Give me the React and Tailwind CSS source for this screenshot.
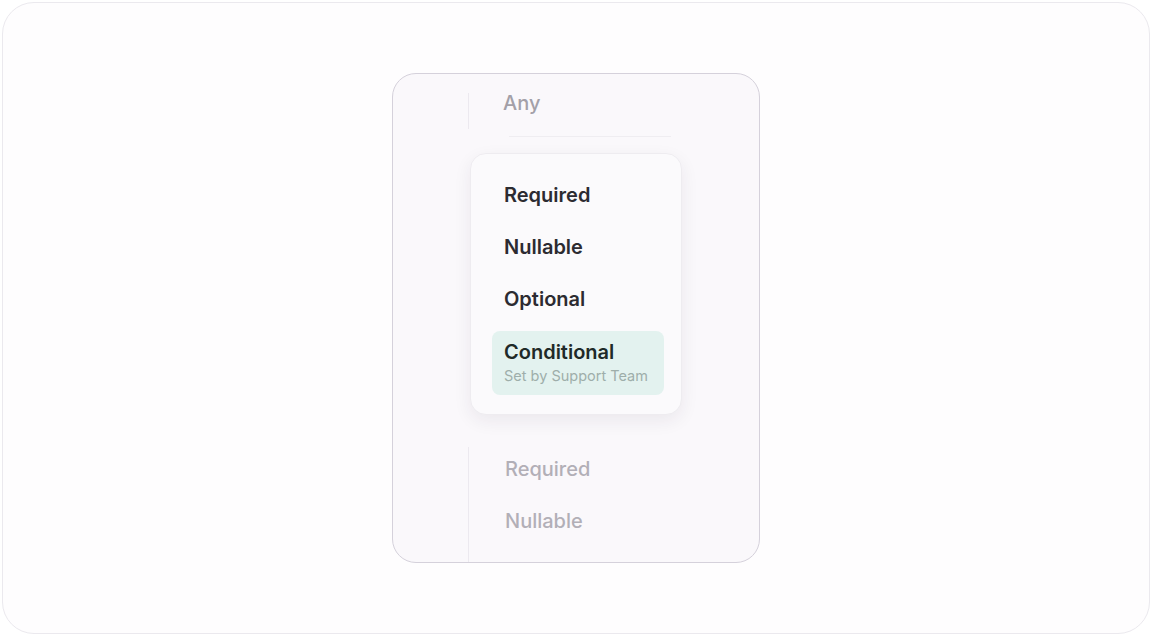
import React from "react";

const options = ["Required", "Nullable", "Optional"];
const faded = ["Required", "Nullable"];

const App = () => {
  return (
    <div
      className="w-[1152px] h-[636px] bg-white p-[2px]"
      style={{ fontFamily: "Inter, 'Noto Sans', sans-serif" }}
    >
      <div className="w-full h-full rounded-[32px] border border-[#ebe9ee] bg-[#fefdfe] flex items-center justify-center">
        <div className="w-[368px] h-[490px] rounded-[24px] border border-[#d5d1db] bg-[#faf8fb] overflow-hidden flex flex-col pl-[75px]">
          {/* previous field */}
          <div className="mt-[15px] h-[42px] flex">
            <div className="mt-[4px] w-px h-[36px] bg-[#ece9ef]" />
            <span className="pl-[34px] text-[20px] leading-[28px] font-medium text-[#a3a0a8]">
              Any
            </span>
          </div>
          <div className="mt-[5px] ml-[41px] w-[162px] h-px bg-[#efedf1]" />

          {/* dropdown menu */}
          <div className="mt-[16px] ml-[2px] w-[212px] rounded-[16px] border border-[#eeecf0] bg-[#fbfafc] shadow-[0_6px_18px_rgba(40,30,60,0.07)] pl-[21px] pr-[17px] pt-[19px] pb-[19px] flex flex-col gap-[8px]">
            {options.map((label) => (
              <div key={label} className="h-[44px] flex items-center pl-[12px]">
                <span className="text-[20px] font-semibold text-[#2c2b31]">{label}</span>
              </div>
            ))}
            <div className="mt-[2px] h-[64px] rounded-[8px] bg-[#e3f2ef] pl-[12px] pt-[7px] flex flex-col">
              <span className="text-[20px] leading-[28px] font-semibold text-[#1f2a28]">
                Conditional
              </span>
              <span className="mt-[1px] text-[14.5px] leading-[18px] text-[#9eaeaa]">
                Set by Support Team
              </span>
            </div>
          </div>

          {/* next field, dimmed */}
          <div className="mt-[32px] flex-1 border-l border-[#ece9ef] pl-[36px] flex flex-col gap-[8px]">
            {faded.map((label) => (
              <div key={label} className="h-[44px] flex items-center">
                <span className="text-[20px] font-medium text-[#b2afb7]">{label}</span>
              </div>
            ))}
          </div>
        </div>
      </div>
    </div>
  );
};

export default App;
